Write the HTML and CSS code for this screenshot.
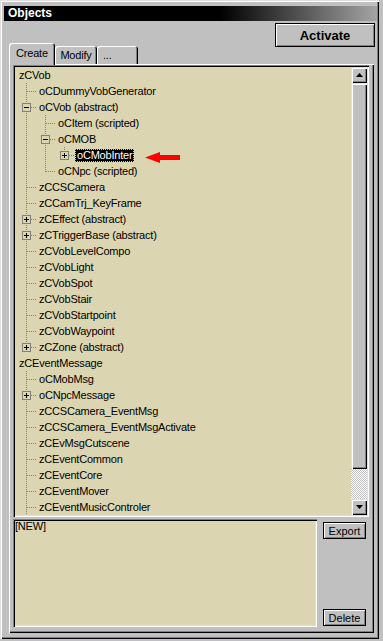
FILE: index.html
```html
<!DOCTYPE html>
<html lang="en">
<head>
    <meta charset="UTF-8">
    <title>Objects</title>
    <link rel="stylesheet" href="styles.css">
</head>
<body>
    <div class="window">
        <div class="titlebar">Objects</div>

        <div class="toolbar">
            <div class="tabs">
                <div class="tab active">Create</div>
                <div class="tab modify">Modify</div>
                <div class="tab more">...</div>
            </div>
            <button class="btn activate">Activate</button>
        </div>

        <div class="page">
            <div class="tree">
                <div class="rows">
                    <div class="row"><span class="label">zCVob</span></div>
                    <div class="row"><span class="g tee"></span><span class="label">oCDummyVobGenerator</span></div>
                    <div class="row"><span class="g tee"><i class="box"></i></span><span class="label">oCVob (abstract)</span></div>
                    <div class="row"><span class="g pipe"></span><span class="g tee"></span><span class="label">oCItem (scripted)</span></div>
                    <div class="row"><span class="g pipe"></span><span class="g tee"><i class="box"></i></span><span class="label">oCMOB</span></div>
                    <div class="row">
                        <span class="g pipe"></span><span class="g pipe"></span><span class="g end"><i class="box plus"></i></span>
                        <span class="label selected">oCMobInter</span>
                        <svg class="arrow" width="35" height="11" viewBox="0 0 35 11"><path d="M0 5.5L15 0v3h20v5H15v3z" fill="#f00"/></svg>
                    </div>
                    <div class="row"><span class="g pipe"></span><span class="g end"></span><span class="label">oCNpc (scripted)</span></div>
                    <div class="row"><span class="g tee"></span><span class="label">zCCSCamera</span></div>
                    <div class="row"><span class="g tee"></span><span class="label">zCCamTrj_KeyFrame</span></div>
                    <div class="row"><span class="g tee"><i class="box plus"></i></span><span class="label">zCEffect (abstract)</span></div>
                    <div class="row"><span class="g tee"><i class="box plus"></i></span><span class="label">zCTriggerBase (abstract)</span></div>
                    <div class="row"><span class="g tee"></span><span class="label">zCVobLevelCompo</span></div>
                    <div class="row"><span class="g tee"></span><span class="label">zCVobLight</span></div>
                    <div class="row"><span class="g tee"></span><span class="label">zCVobSpot</span></div>
                    <div class="row"><span class="g tee"></span><span class="label">zCVobStair</span></div>
                    <div class="row"><span class="g tee"></span><span class="label">zCVobStartpoint</span></div>
                    <div class="row"><span class="g tee"></span><span class="label">zCVobWaypoint</span></div>
                    <div class="row"><span class="g end"><i class="box plus"></i></span><span class="label">zCZone (abstract)</span></div>
                    <div class="row"><span class="label">zCEventMessage</span></div>
                    <div class="row"><span class="g tee"></span><span class="label">oCMobMsg</span></div>
                    <div class="row"><span class="g tee"><i class="box plus"></i></span><span class="label">oCNpcMessage</span></div>
                    <div class="row"><span class="g tee"></span><span class="label">zCCSCamera_EventMsg</span></div>
                    <div class="row"><span class="g tee"></span><span class="label">zCCSCamera_EventMsgActivate</span></div>
                    <div class="row"><span class="g tee"></span><span class="label">zCEvMsgCutscene</span></div>
                    <div class="row"><span class="g tee"></span><span class="label">zCEventCommon</span></div>
                    <div class="row"><span class="g tee"></span><span class="label">zCEventCore</span></div>
                    <div class="row"><span class="g tee"></span><span class="label">zCEventMover</span></div>
                    <div class="row"><span class="g tee"></span><span class="label">zCEventMusicControler</span></div>
                </div>

                <div class="scrollbar">
                    <div class="sb-btn"><svg width="7" height="4" viewBox="0 0 7 4"><path d="M0 4h7L3.5 0z"/></svg></div>
                    <div class="thumb"></div>
                    <div class="track"></div>
                    <div class="sb-btn"><svg width="7" height="4" viewBox="0 0 7 4"><path d="M0 0h7L3.5 4z"/></svg></div>
                </div>
            </div>

            <div class="bottom">
                <div class="notes">[NEW]</div>
                <div class="side">
                    <button class="btn small">Export</button>
                    <button class="btn small">Delete</button>
                </div>
            </div>
        </div>
    </div>
</body>
</html>
```

FILE: styles.css
```css
* {
    margin: 0;
    padding: 0;
    box-sizing: border-box;
}

body {
    background-color: #c0c0c0;
    color: #000;
    font-family: "Liberation Sans", Arial, sans-serif;
    font-size: 11px;
}

.window {
    width: 379px;
    height: 639px;
    padding: 6px 2px 6px 4px;
    display: flex;
    flex-direction: column;
    box-shadow: inset 1px 1px #dfdfdf, inset 2px 2px #fff, inset -1px -1px #000, inset -2px -2px #808080;
}

.titlebar {
    height: 15px;
    padding-left: 4px;
    background: linear-gradient(to right, #000 0, #000 58%, #a4a4a4 100%);
    color: #fff;
    font-size: 12px;
    font-weight: bold;
    line-height: 15px;
}

/* tabs + activate button */
.toolbar {
    height: 43px;
    display: flex;
    justify-content: space-between;
}

.tabs {
    align-self: flex-end;
    display: flex;
    align-items: flex-end;
    margin-left: 5px;
}

.tab {
    height: 18px;
    padding-top: 3px;
    line-height: 13px;
    text-align: center;
    letter-spacing: -0.2px;
    border-radius: 3px 3px 0 0;
    box-shadow: inset 1px 1px #fff, inset -1px 0 #000, inset -2px 0 #808080;
}

.tab.active {
    position: relative;
    z-index: 1;
    width: 46px;
    height: 22px;
    padding-top: 4px;
    margin-bottom: -1px;
    background-color: #c0c0c0;
}

.tab.modify {
    width: 42px;
}

.tab.more {
    width: 41px;
    text-align: left;
    padding-left: 6px;
}

.btn {
    background-color: #c0c0c0;
    border: 1px solid #000;
    box-shadow: inset 1px 1px #fff, inset -1px -1px #808080;
    font-family: inherit;
    font-size: 11px;
    color: #000;
}

.activate {
    width: 100px;
    height: 24px;
    margin: 2px 2px 0 0;
    font-size: 13px;
    font-weight: bold;
}

/* tab page */
.page {
    flex: 1;
    margin: 0 3px 0 5px;
    padding: 1px 5px 6px 4px;
    display: flex;
    flex-direction: column;
    gap: 2px;
    box-shadow: inset 1px 1px #fff, inset -1px -1px #000, inset -2px -2px #808080;
}

.tree {
    height: 452px;
    flex: none;
    display: flex;
    padding: 2px;
    background-color: #dcd5b1;
    box-shadow: inset 1px 1px #808080, inset 2px 2px #000, inset -1px -1px #fff, inset -2px -2px #dfdfdf;
}

.rows {
    flex: 1;
    overflow: hidden;
}

.row {
    display: flex;
    align-items: center;
    height: 16px;
    padding-left: 2px;
    white-space: nowrap;
}

.label {
    padding: 0 2px;
    line-height: 13px;
    letter-spacing: -0.2px;
}

.g + .label {
    margin-left: 1px;
}

.label.selected {
    background-color: #000;
    color: #fff;
    outline: 1px dotted #c0c0c0;
    outline-offset: -1px;
}

.arrow {
    margin: 4px 0 0 11px;
}

/* tree guide lines */
.g {
    flex: none;
    align-self: flex-start;
    width: 19px;
    height: 16px;
    padding: 4px 0 0 5px;
    background-repeat: no-repeat;
}

.pipe {
    background-image: repeating-linear-gradient(to bottom, #808080 0 1px, transparent 1px 2px);
    background-size: 1px 16px;
    background-position: 9px 0;
}

.tee,
.end {
    background-image:
        repeating-linear-gradient(to bottom, #808080 0 1px, transparent 1px 2px),
        repeating-linear-gradient(to right, #808080 0 1px, transparent 1px 2px);
    background-size: 1px 16px, 9px 1px;
    background-position: 9px 0, 10px 8px;
}

.end {
    background-size: 1px 9px, 9px 1px;
}

.box {
    display: block;
    width: 9px;
    height: 9px;
    border: 1px solid #808080;
    background: linear-gradient(#000, #000) center / 5px 1px no-repeat, #dcd5b1;
}

.box.plus {
    background:
        linear-gradient(#000, #000) center / 5px 1px no-repeat,
        linear-gradient(#000, #000) center / 1px 5px no-repeat,
        #dcd5b1;
}

/* scrollbar */
.scrollbar {
    width: 16px;
    display: flex;
    flex-direction: column;
}

.sb-btn,
.thumb {
    background-color: #c0c0c0;
    box-shadow: inset 1px 1px #dfdfdf, inset 2px 2px #fff, inset -1px -1px #000, inset -2px -2px #808080;
}

.sb-btn {
    height: 16px;
    display: flex;
    align-items: center;
    justify-content: center;
}

.thumb {
    height: 386px;
}

.track {
    flex: 1;
    background: repeating-conic-gradient(#fff 0 25%, #c0c0c0 0 50%) 0 0 / 2px 2px;
}

/* bottom part */
.bottom {
    flex: 1;
    display: flex;
    gap: 6px;
    padding-right: 3px;
}

.notes {
    flex: 1;
    padding: 1px 2px;
    line-height: 13px;
    letter-spacing: -0.2px;
    background-color: #dcd5b1;
    box-shadow: inset 1px 1px #808080, inset 2px 2px #000, inset -1px -1px #fff, inset -2px -2px #dfdfdf;
}

.side {
    width: 43px;
    display: flex;
    flex-direction: column;
    justify-content: space-between;
    padding: 3px 0 1px;
}

.btn.small {
    height: 17px;
}
```
